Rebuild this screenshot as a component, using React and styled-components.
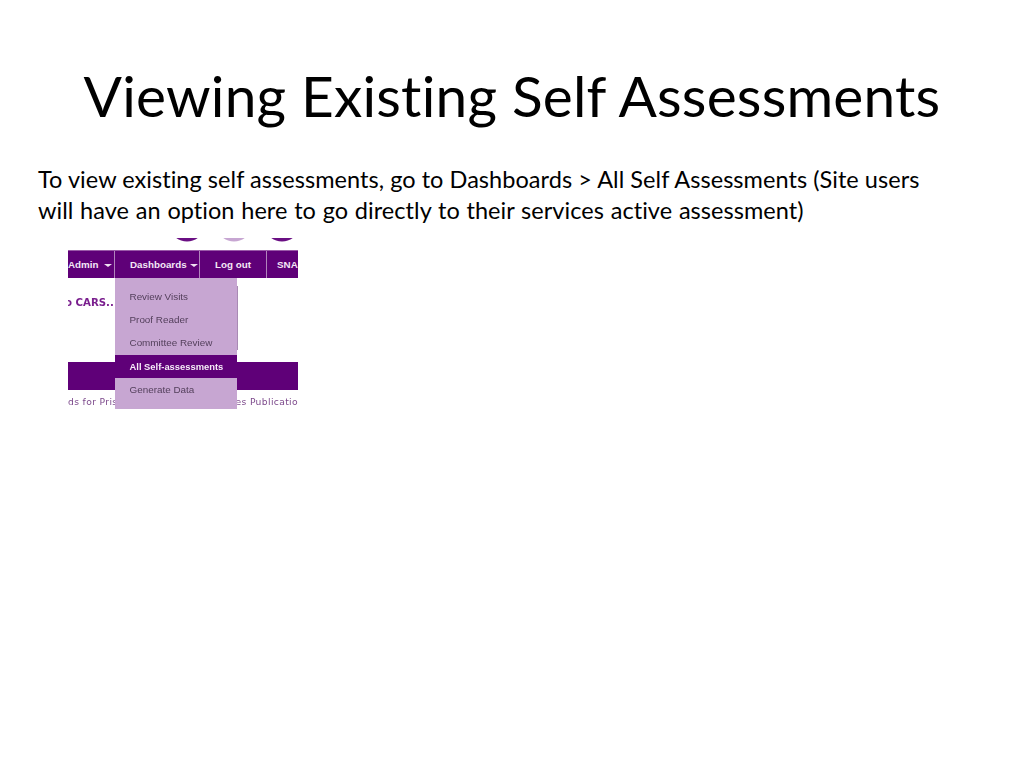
import React from "react";
import styled, { createGlobalStyle } from "styled-components";

const Global = createGlobalStyle`
  html, body { margin: 0; padding: 0; background: #fff; }
  body { font-family: "Lato", "Open Sans", sans-serif; color: #000; font-variant-ligatures: none; }
`;

const Slide = styled.main`
  width: 1024px;
  height: 768px;
  overflow: hidden;
  box-sizing: border-box;
  padding-top: 59px;
`;

const Title = styled.h1`
  margin: 0;
  height: 73px;
  font-family: "Lato", sans-serif;
  font-weight: 400;
  font-size: 56.8px;
  line-height: 73px;
  text-align: center;
  letter-spacing: 0.2px;
`;

const Body = styled.div`
  margin: 32px 0 0 38px;
  width: 940px;
  font-family: "Lato", sans-serif;
  font-size: 23.5px;
  line-height: 30.5px;
  letter-spacing: 0.05px;
  white-space: nowrap;
`;

const BodyLine = styled.p`
  margin: 0;
  word-spacing: ${(p) => p.$spread || 0}px;
`;

const Shot = styled.figure`
  position: relative;
  margin: 13px 0 0 68px;
  width: 230px;
  height: 171px;
  overflow: hidden;
  filter: blur(0.35px);
  font-family: "Liberation Sans", sans-serif;
`;

const Arcs = styled.svg`
  display: block;
  width: 230px;
  height: 12px;
`;

const Nav = styled.nav`
  display: flex;
  height: 28px;
  background: #5f0078;
  border-top: 1px solid #9a5aa8;
  box-sizing: border-box;
`;

const NavItem = styled.div`
  flex: 0 0 ${(p) => p.$w}px;
  box-sizing: border-box;
  display: flex;
  align-items: center;
  justify-content: ${(p) => (p.$left ? "flex-start" : "center")};
  padding-left: ${(p) => p.$inset || 0}px;
  gap: 3px;
  color: #f4e8f6;
  font-size: 9.8px;
  font-weight: 700;
  white-space: nowrap;
  overflow: hidden;
  border-right: ${(p) => (p.$last ? "none" : "1px solid #b184bc")};
`;

const Caret = styled.span`
  width: 0;
  height: 0;
  margin-top: 2px;
  border-left: 4px solid transparent;
  border-right: 4px solid transparent;
  border-top: 3px solid #f0e2f2;
`;

const Welcome = styled.div`
  height: 84px;
  box-sizing: border-box;
  padding-top: 19px;
  color: #7a1f8e;
  font-family: "DejaVu Sans", sans-serif;
  font-size: 10.2px;
  font-weight: 700;
  line-height: 12px;
  margin-left: -3px;
`;

const Band = styled.div`
  height: 28px;
  background: #5f0078;
`;

const Links = styled.div`
  display: flex;
  justify-content: space-between;
  padding-top: 6px;
  color: #7d4a8c;
  font-family: "DejaVu Sans", sans-serif;
  font-size: 9.2px;
  line-height: 12px;
  letter-spacing: 0.35px;
  white-space: nowrap;
`;

const Menu = styled.ul`
  position: absolute;
  left: 47px;
  top: 40px;
  width: 122px;
  height: 131px;
  margin: 0;
  padding: 7px 0 0;
  box-sizing: border-box;
  list-style: none;
  background: #c7a6d2;
`;

const MenuEdge = styled.span`
  position: absolute;
  left: 122px;
  top: 8px;
  width: 1px;
  height: 64px;
  background: #a98ab4;
`;

const MenuItem = styled.li`
  height: 23.2px;
  padding-left: 14.5px;
  display: flex;
  align-items: center;
  font-size: ${(p) => (p.$active ? "9.4px" : "9.9px")};
  color: ${(p) => (p.$active ? "#f6ecf8" : "#54405c")};
  background: ${(p) => (p.$active ? "#5f0078" : "transparent")};
  font-weight: ${(p) => (p.$active ? 700 : 400)};
`;

export default function App() {
  return (
    <Slide>
      <Global />
      <Title>Viewing Existing Self Assessments</Title>
      <Body>
        <BodyLine>To view existing self assessments, go to Dashboards &gt; All Self Assessments (Site users</BodyLine>
        <BodyLine $spread={0.65}>will have an option here to go directly to their services active assessment)</BodyLine>
      </Body>
      <Shot>
        <Arcs viewBox="0 0 230 12" aria-hidden="true">
          <ellipse cx="119" cy="-12" rx="17" ry="15.5" fill="#6a0f83" />
          <ellipse cx="166" cy="-12" rx="17" ry="15.5" fill="#c7a6d2" />
          <ellipse cx="214" cy="-12" rx="17" ry="15.5" fill="#6a0f83" />
        </Arcs>
        <Nav>
          <NavItem $w={47} $left>
            Admin&nbsp;<Caret />
          </NavItem>
          <NavItem $w={85} $left $inset={15}>
            Dashboards <Caret />
          </NavItem>
          <NavItem $w={67}>Log out</NavItem>
          <NavItem $w={31} $last>&nbsp;&nbsp;&nbsp;&nbsp;&nbsp;&nbsp;SNAP</NavItem>
        </Nav>
        <Welcome>o CARS..</Welcome>
        <Band />
        <Links>
          <span>ds for Pris</span>
          <span>es Publicatio</span>
        </Links>
        <Menu>
          <MenuEdge />
          <MenuItem>Review Visits</MenuItem>
          <MenuItem>Proof Reader</MenuItem>
          <MenuItem>Committee Review</MenuItem>
          <MenuItem $active>All Self-assessments</MenuItem>
          <MenuItem>Generate Data</MenuItem>
        </Menu>
      </Shot>
    </Slide>
  );
}
